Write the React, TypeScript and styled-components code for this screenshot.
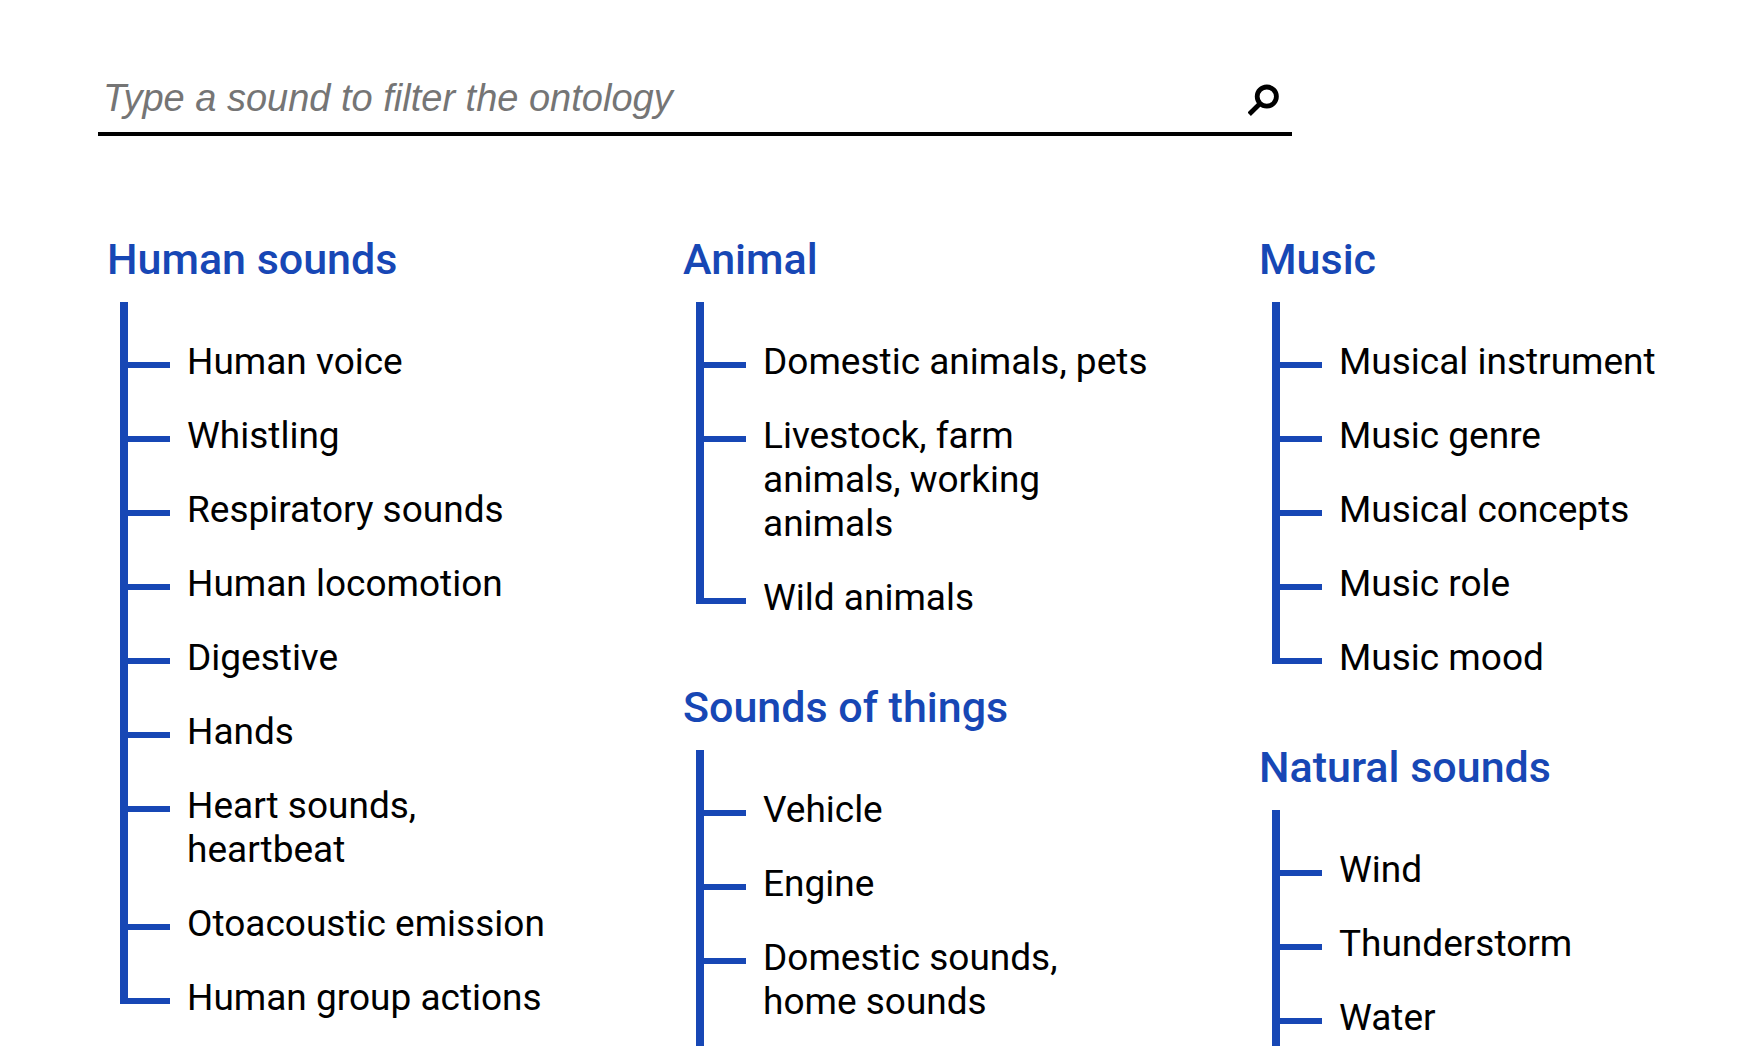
import React, { useState } from "react";
import styled, { createGlobalStyle } from "styled-components";

const BLUE = "#1747b5";

const GlobalStyle = createGlobalStyle`
  *, *::before, *::after { box-sizing: border-box; }
  body {
    margin: 0;
    background: #fff;
    color: #000;
    font-family: Roboto, "Liberation Sans", sans-serif;
  }
`;

const Page = styled.main`
  display: flex;
  flex-direction: column;
  min-height: 100vh;
  padding-top: 64px;
`;

const SearchBar = styled.form`
  display: flex;
  align-items: center;
  width: calc(100% - 196px);
  max-width: 1194px;
  height: 72px;
  margin-left: 98px;
  padding: 4px 8px 0 5px;
  border-bottom: 4px solid #000;
`;

const SearchInput = styled.input`
  flex: 1;
  min-width: 0;
  height: 64px;
  padding: 0 0 4px;
  border: 0;
  outline: 0;
  background: transparent;
  color: #000;
  font: italic 38px "Liberation Sans", Arial, sans-serif;

  &::placeholder {
    color: #757575;
    opacity: 1;
  }
`;

const SearchButton = styled.button`
  display: flex;
  align-items: center;
  justify-content: center;
  width: 40px;
  height: 40px;
  padding: 0;
  border: 0;
  background: transparent;
  color: #000;
  cursor: pointer;
`;

const Columns = styled.div`
  flex: 1;
  display: grid;
  grid-template-columns: repeat(3, minmax(0, 1fr));
  column-gap: 100px;
  padding: 97px 18px 0 104px;
`;

const Column = styled.div`
  display: flex;
  flex-direction: column;
  gap: 61px;
`;

const Group = styled.section<{ $open?: boolean }>`
  display: flex;
  flex-direction: column;
  flex: ${(p) => (p.$open ? "1" : "none")};
`;

const GroupTitle = styled.h2`
  margin: 0 0 17px;
  padding-left: 3px;
  color: ${BLUE};
  font-size: 43px;
  font-weight: 500;
  line-height: 52px;
`;

/* An open list keeps its rail running down to the page's end. */
const Branches = styled.ul<{ $open?: boolean }>`
  flex: 1;
  margin: 0 0 0 16px;
  padding: 0;
  list-style: none;
  background: ${(p) => (p.$open ? `linear-gradient(${BLUE}, ${BLUE}) 0 0 / 8px 100% no-repeat` : "none")};
`;

const Branch = styled.li<{ $end: boolean }>`
  padding: 30px 0 0 67px;
  background: linear-gradient(${BLUE}, ${BLUE}) 0 0 / 8px ${(p) => (p.$end ? "58px" : "100%")} no-repeat;

  &:first-child {
    padding-top: 38px;
  }
`;

const BranchLink = styled.a`
  position: relative;
  display: block;
  color: #000;
  font-size: 37px;
  line-height: 44px;
  text-decoration: none;

  &::before {
    content: "";
    position: absolute;
    top: 22px;
    left: -59px;
    width: 42px;
    height: 6px;
    background: ${BLUE};
  }
`;

type GroupData = { title: string; items: string[]; open?: boolean };

const COLUMNS: GroupData[][] = [
  [
    {
      title: "Human sounds",
      items: [
        "Human voice",
        "Whistling",
        "Respiratory sounds",
        "Human locomotion",
        "Digestive",
        "Hands",
        "Heart sounds, heartbeat",
        "Otoacoustic emission",
        "Human group actions",
      ],
    },
  ],
  [
    {
      title: "Animal",
      items: ["Domestic animals, pets", "Livestock, farm animals, working animals", "Wild animals"],
    },
    { title: "Sounds of things", items: ["Vehicle", "Engine", "Domestic sounds, home sounds"], open: true },
  ],
  [
    {
      title: "Music",
      items: ["Musical instrument", "Music genre", "Musical concepts", "Music role", "Music mood"],
    },
    { title: "Natural sounds", items: ["Wind", "Thunderstorm", "Water"], open: true },
  ],
];

function SearchIcon() {
  return (
    <svg width="32" height="32" viewBox="0 0 32 32" fill="none" stroke="currentColor" aria-hidden="true">
      <circle cx="18.8" cy="12.6" r="9.6" strokeWidth="4.8" />
      <path d="M12.6 19 1.2 30.2" strokeWidth="4.8" />
    </svg>
  );
}

function SoundGroup({ title, items, open }: GroupData) {
  return (
    <Group $open={open}>
      <GroupTitle>{title}</GroupTitle>
      <Branches $open={open}>
        {items.map((item, i) => (
          <Branch key={item} $end={!open && i === items.length - 1}>
            <BranchLink href="#">{item}</BranchLink>
          </Branch>
        ))}
      </Branches>
    </Group>
  );
}

export default function App() {
  const [query, setQuery] = useState("");
  return (
    <>
      <GlobalStyle />
      <Page>
        <SearchBar role="search" onSubmit={(e) => e.preventDefault()}>
          <SearchInput
            type="text"
            aria-label="Type a sound to filter the ontology"
            placeholder="Type a sound to filter the ontology"
            value={query}
            onChange={(e) => setQuery(e.target.value)}
          />
          <SearchButton type="submit" aria-label="Search">
            <SearchIcon />
          </SearchButton>
        </SearchBar>
        <Columns>
          {COLUMNS.map((groups) => (
            <Column key={groups[0].title}>
              {groups.map((group) => (
                <SoundGroup key={group.title} {...group} />
              ))}
            </Column>
          ))}
        </Columns>
      </Page>
    </>
  );
}
